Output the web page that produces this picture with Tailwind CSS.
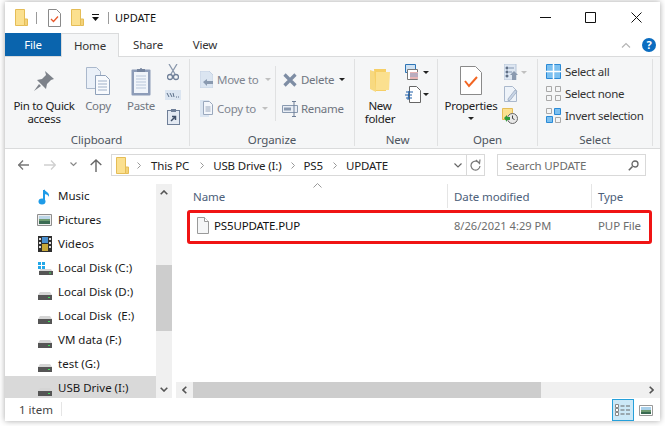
<!DOCTYPE html>
<html><head><meta charset="utf-8"><script src="https://cdn.jsdelivr.net/npm/@tailwindcss/browser@4"></script></head>
<body class="bg-white">
<div class="w-[665px] h-[426px] overflow-hidden pt-[2px] pl-[5px] font-['Noto_Sans',sans-serif] text-[11.5px] leading-[13px] text-[#1a1a1a]">
<div class="w-[655px] h-[419px] bg-white flex flex-col shadow-[0_0_6px_rgba(0,0,0,0.35)]">

<!-- title bar -->
<div class="h-[31px] shrink-0 flex items-center relative">
  <svg class="ml-[10px]" width="13" height="17" viewBox="0 0 13 17"><path d="M.5.5h9v16h-9z" fill="#fbe08f" stroke="#e5bd56"/><path d="M9.500 10h3v6.500h-3z" fill="#f3d27a" stroke="#e5bd56"/></svg>
  <div class="ml-[8px] w-px h-[12px] bg-[#9a9a9a]"></div>
  <svg class="ml-[11px]" width="13" height="18" viewBox="0 0 13 18"><path d="M.5.500h8l4 4v13h-12z" fill="#fff" stroke="#8a8a8a"/><path d="M3 10l2.500 2.500L10 7.500" fill="none" stroke="#e8582a" stroke-width="1.300"/></svg>
  <svg class="ml-[10px]" width="13" height="17" viewBox="0 0 13 17"><path d="M.5.5h9v16h-9z" fill="#fbe08f" stroke="#e5bd56"/><path d="M9.500 10h3v6.500h-3z" fill="#f3d27a" stroke="#e5bd56"/></svg>
  <svg class="ml-[8px]" width="7" height="7" viewBox="0 0 7 7"><path d="M0 0h7v1H0zM0 3h7L3.500 7z" fill="#111"/></svg>
  <div class="ml-[9px] w-px h-[12px] bg-[#9a9a9a]"></div>
  <span class="ml-[6px] text-[11px] text-[#111]">UPDATE</span>
  <div class="ml-auto flex items-center pr-[18px]">
    <svg width="11" height="11" viewBox="0 0 11 11"><path d="M0 5.500h11" stroke="#111"/></svg>
    <svg class="ml-[34px]" width="11" height="11" viewBox="0 0 11 11"><path d="M.5.500h10v10H.5z" fill="none" stroke="#111"/></svg>
    <svg class="ml-[35px]" width="11" height="11" viewBox="0 0 11 11"><path d="M.5.500l10 10M10.500.500l-10 10" stroke="#111"/></svg>
  </div>
</div>

<!-- tabs -->
<div class="h-[24px] shrink-0 flex items-stretch border-b border-[#dadbdc] text-[11.5px] tracking-[-0.2px] relative">
  <div class="w-[56px] h-[23px] bg-[#0a64ad] text-white flex items-center justify-center">File</div>
  <div class="w-[58px] h-[24px] bg-[#f5f6f7] border border-b-0 border-[#dadbdc] text-[#333] flex items-center justify-center">Home</div>
  <div class="w-[58px] text-[#333] flex items-center justify-center">Share</div>
  <div class="w-[56px] text-[#333] flex items-center justify-center">View</div>
  <div class="ml-auto flex items-center pr-[4px] gap-[11px]">
    <svg width="10" height="6" viewBox="0 0 10 6"><path d="M1 5.500l4-4 4 4" fill="none" stroke="#b5b5b5" stroke-width="1.200"/></svg>
    <div class="w-[14px] h-[14px] rounded-full bg-[#0a6cc0] text-white font-bold text-[11px] flex items-center justify-center">?</div>
  </div>
</div>

<!-- ribbon -->
<div class="h-[92px] shrink-0 bg-[#f5f6f7] border-b border-[#dadbdc] flex text-[#6f7580] tracking-[-0.3px]">
  <!-- clipboard -->
  <div class="w-[185px] my-[2px] border-r border-[#e0e1e2] flex flex-col">
    <div class="h-[74px] flex pl-[8px] pt-[3px]">
      <div class="w-[62px] flex flex-col items-center text-center text-[#222] whitespace-nowrap">
        <div class="h-[37px] flex items-center justify-center">
          <svg width="22" height="22" viewBox="0 0 22 22"><path d="M12 1l9 8-3 1-4 4-1 5-9-9 5-1 4-4z" fill="#7d828a"/><path d="M6 14l-5 7 7-5z" fill="#7d828a"/></svg>
        </div>
        <span>Pin to Quick<br>access</span>
      </div>
      <div class="w-[36px] ml-[5px] flex flex-col items-center">
        <div class="h-[37px] flex items-center justify-center">
          <svg width="24" height="28" viewBox="0 0 24 28"><path d="M.5.500h10l4 4v17H.5z" fill="#eaf0f8" stroke="#aab8cc"/><path d="M9.500 8.500h10l4 4v15h-14z" fill="#f8fafd" stroke="#8fa1ba"/><path d="M12 14h9M12 17h9M12 20h9M12 23h9" stroke="#9fb0c8"/></svg>
        </div>
        <span>Copy</span>
      </div>
      <div class="w-[36px] ml-[7px] flex flex-col items-center">
        <div class="h-[37px] flex items-center justify-center">
          <svg width="20" height="30" viewBox="0 0 20 30"><rect x=".5" y="3.500" width="19" height="26" rx="1" fill="#8d9cb8"/><rect x="3" y="6" width="14" height="21" fill="#f0f4fa"/><path d="M5 10h10M5 13h10M5 16h10M5 19h10M5 22h10" stroke="#b8c6da"/><path d="M6 3h3a1 1 0 012 0h3v3H6z" fill="#76859f"/></svg>
        </div>
        <span>Paste</span>
      </div>
      <div class="w-[20px] ml-[4px] flex flex-col items-center">
        <svg class="mt-[2px]" width="12" height="17" viewBox="0 0 12 17"><path d="M2 0l6 10M10 0L4 10" stroke="#8a98ad" stroke-width="1.300"/><circle cx="3" cy="13" r="2.500" fill="none" stroke="#6f7f98" stroke-width="1.300"/><circle cx="9" cy="13" r="2.500" fill="none" stroke="#6f7f98" stroke-width="1.300"/></svg>
        <svg class="mt-[9px]" width="16" height="10" viewBox="0 0 16 10"><path d="M0 0h16v10H0z" fill="#dbe5f1"/><path d="M2 3l2 4M5 3l2 4M8 3l1 4" stroke="#5a6d88"/><path d="M11 7h1M13 7h1" stroke="#5a6d88"/></svg>
        <svg class="mt-[8px]" width="13" height="17" viewBox="0 0 13 17"><rect x=".5" y="2.500" width="12" height="14" fill="#e3e9f2" stroke="#6f7f98"/><path d="M4 1h5v3H4z" fill="#6f7f98"/><path d="M4 13l4-4M5 8.500h3.500V12" fill="none" stroke="#3f4f68" stroke-width="1.500"/></svg>
      </div>
    </div>
    <div class="text-center text-[#4e5560] text-[11.5px] tracking-[-0.1px] pr-[1px] pt-[1px]">Clipboard</div>
  </div>
  <!-- organize -->
  <div class="w-[165px] my-[2px] border-r border-[#e0e1e2] flex flex-col">
    <div class="h-[74px] flex pt-[7px]">
      <div class="w-[86px] border-r border-[#e0e1e2] h-[55px] pl-[10px]">
        <div class="h-[29px] flex items-center mt-[-1px]">
          <svg width="13" height="17" viewBox="0 0 13 17"><path d="M0 0h9l4 4v13H0z" fill="#dbe5f1" stroke="#c5d2e3"/><path d="M3 11l4-3v2h6v3H7v2z" fill="#8a9ab0"/></svg>
          <span class="ml-[4px] text-[#7f8590]">Move to</span>
          <svg class="ml-[6px]" width="6" height="3" viewBox="0 0 6 3"><path d="M0 0h6L3 3z" fill="#c0c0c0"/></svg>
        </div>
        <div class="h-[29px] flex items-center">
          <svg width="13" height="17" viewBox="0 0 13 17"><path d="M0 0h9v17H0z" fill="#dbe5f1"/><path d="M3.500 1.500h6l3 3v10h-9z" fill="#f3f6fb" stroke="#9aa8bd"/><path d="M5.500 7h5M5.500 9h5M5.500 11h5" stroke="#9aa8bd"/></svg>
          <span class="ml-[4px] text-[#7f8590]">Copy to</span>
          <svg class="ml-[6px]" width="6" height="3" viewBox="0 0 6 3"><path d="M0 0h6L3 3z" fill="#c0c0c0"/></svg>
        </div>
      </div>
      <div class="pl-[6px]">
        <div class="h-[29px] flex items-center mt-[-1px]">
          <svg class="ml-[1px]" width="14" height="14" viewBox="0 0 14 14"><path d="M1.500 1.500l11 11M12.500 1.500l-11 11" stroke="#7e8da4" stroke-width="3.200"/></svg>
          <span class="ml-[4px] text-[#6f7580]">Delete</span>
          <svg class="ml-[5px]" width="6" height="3" viewBox="0 0 6 3"><path d="M0 0h6L3 3z" fill="#222"/></svg>
        </div>
        <div class="h-[29px] flex items-center">
          <svg width="16" height="16" viewBox="0 0 16 16"><path d="M.5 4.500h15v7H.5z" fill="#e9eef5" stroke="#8a9ab0"/><path d="M2 6.500h7v3H2z" fill="#8a9ab0"/><path d="M12 0v16M10 .5h4M10 15.500h4" stroke="#6f7f98"/></svg>
          <span class="ml-[3px] text-[#6f7580]">Rename</span>
        </div>
      </div>
    </div>
    <div class="text-center text-[#4e5560] text-[11.5px] tracking-[-0.1px] pt-[1px]">Organize</div>
  </div>
  <!-- new -->
  <div class="w-[83px] my-[2px] border-r border-[#e0e1e2] flex flex-col">
    <div class="h-[74px] flex pt-[3px]">
      <div class="ml-[5px] w-[40px] flex flex-col items-center text-center text-[#222]">
        <div class="h-[37px] flex items-center justify-center">
          <svg width="20" height="26" viewBox="0 0 20 26"><path d="M0 2l6 2v20l-6-3z" fill="#f7d980"/><path d="M4 1h12v22H6z" fill="#f6cf66"/><path d="M6 4h14l-1 18H6z" fill="#fbe08f"/></svg>
        </div>
        <span>New<br>folder</span>
      </div>
      <div class="ml-[5px] mt-[2px]">
        <div class="flex items-center">
          <svg width="16" height="16" viewBox="0 0 16 16"><path d="M.5.500h10v8H.5z" fill="#cfe2f3" stroke="#2e75b6"/><path d="M2.500 5.500h10v10h-10z" fill="#fff" stroke="#777"/><path d="M5 8h8v7H5z" fill="#e8b5b5"/><path d="M5 10h8M5 12h8" stroke="#8aa4c8"/></svg>
          <svg class="ml-[2px]" width="6" height="3" viewBox="0 0 6 3"><path d="M0 0h6L3 3z" fill="#222"/></svg>
        </div>
        <div class="flex items-center mt-[6px]">
          <svg width="16" height="17" viewBox="0 0 16 17"><path d="M4.500.500h7l4 4v12h-11z" fill="#fff" stroke="#666"/><path d="M1 6h7M0 9h7M1 12h6M4 5l-1 9" stroke="#1f5fa8"/></svg>
          <svg class="ml-[2px]" width="6" height="3" viewBox="0 0 6 3"><path d="M0 0h6L3 3z" fill="#222"/></svg>
        </div>
      </div>
    </div>
    <div class="text-center text-[#4e5560] text-[11.5px] tracking-[-0.1px] pt-[1px] pl-[3px]">New</div>
  </div>
  <!-- open -->
  <div class="w-[100px] my-[2px] border-r border-[#e0e1e2] flex flex-col">
    <div class="h-[74px] flex pt-[3px]">
      <div class="ml-[5px] w-[56px] flex flex-col items-center text-center text-[#222]">
        <div class="h-[37px] flex items-center justify-center">
          <svg width="22" height="29" viewBox="0 0 22 29"><path d="M.5.500h15l6 6v22H.5z" fill="#fff" stroke="#8a8a8a"/><path d="M5 15l4 5 8-9" fill="none" stroke="#f26522" stroke-width="2"/></svg>
        </div>
        <span>Properties</span>
        <svg class="mt-[5px]" width="6" height="3" viewBox="0 0 6 3"><path d="M0 0h6L3 3z" fill="#222"/></svg>
      </div>
      <div class="ml-[5px] mt-[2px]">
        <div class="flex items-center">
          <svg width="14" height="16" viewBox="0 0 14 16"><path d="M0 0h12v16H0z" fill="#dde6f1" stroke="#b7c5d8"/><path d="M2 3h2v2H2zM2 7h2v2H2zM2 11h2v2H2zM5 4h5M5 8h3" stroke="#8295b0"/><path d="M10 7l4 4h-2v5H8v-5H6z" fill="#8a9ab0"/></svg>
          <svg class="ml-[3px]" width="6" height="3" viewBox="0 0 6 3"><path d="M0 0h6L3 3z" fill="#c0c0c0"/></svg>
        </div>
        <svg class="mt-[6px]" width="14" height="16" viewBox="0 0 14 16"><path d="M.5.500h8l4 4v11H.500z" fill="#eef3f9" stroke="#aab8cc"/><path d="M4 13l7-9 2 1.500-7 9H4z" fill="#c7d4e6" stroke="#8a9ab0" stroke-width=".6"/></svg>
        <svg class="mt-[6px] -ml-[2px]" width="16" height="16" viewBox="0 0 16 16"><path d="M.5.500h10v11H.5z" fill="#fbe08f" stroke="#e5bd56"/><circle cx="10.500" cy="10.500" r="5" fill="#e8e8e8" stroke="#666"/><path d="M10.500 7.500v3l2 1" fill="none" stroke="#444"/><path d="M2 10l3-3v2h3v3H5v2z" fill="#2e9b3a"/></svg>
      </div>
    </div>
    <div class="text-center text-[#4e5560] text-[11.5px] tracking-[-0.1px] pt-[1px]">Open</div>
  </div>
  <!-- select -->
  <div class="w-[115px] my-[2px] border-r border-[#e0e1e2] flex flex-col">
    <div class="h-[74px] pl-[8px] pt-[1px] flex flex-col text-[#333]">
      <div class="h-[22px] flex items-center gap-[4px]">
        <svg width="15" height="15" viewBox="0 0 15 15"><path d="M.5.500h14v14H.5z" fill="#7cc0f0" stroke="#2b8ad6"/><path d="M7.500 0v15M0 7.500h15" stroke="#fff" stroke-width="1.500"/></svg><span>Select all</span>
      </div>
      <div class="h-[22px] flex items-center gap-[4px]">
        <svg width="15" height="15" viewBox="0 0 15 15"><g fill="none" stroke="#a9a9a9"><path d="M.5.500h5v5h-5zM9.500.500h5v5h-5zM.5 9.500h5v5h-5zM9.500 9.500h5v5h-5z"/></g></svg><span>Select none</span>
      </div>
      <div class="h-[22px] flex items-center gap-[4px]">
        <svg width="15" height="15" viewBox="0 0 15 15"><g fill="none" stroke="#a9a9a9"><path d="M.5.500h5v5h-5zM9.500 9.500h5v5h-5z"/></g><path d="M8.500.500h6v6h-6zM.5 8.500h6v6h-6z" fill="#7cc0f0" stroke="#2b8ad6"/></svg><span>Invert selection</span>
      </div>
    </div>
    <div class="text-center text-[#4e5560] text-[11.5px] tracking-[-0.1px] pt-[1px]">Select</div>
  </div>
</div>

<!-- address bar -->
<div class="h-[28px] shrink-0 flex items-start text-[#222] pt-[5px] tracking-[-0.15px]">
  <svg class="ml-[13px] mt-[6px]" width="12" height="10" viewBox="0 0 12 10"><path d="M0 5h11M5 .5L.7 5 5 9.500" fill="none" stroke="#777" stroke-width="1.300"/></svg>
  <svg class="ml-[14px] mt-[6px]" width="12" height="10" viewBox="0 0 12 10"><path d="M0 5h11M7 .5L11.300 5 7 9.500" fill="none" stroke="#d0d0d0" stroke-width="1.300"/></svg>
  <svg class="ml-[14px] mt-[8px]" width="7" height="5" viewBox="0 0 7 5"><path d="M.5.500l3 3 3-3" fill="none" stroke="#888" stroke-width="1.200"/></svg>
  <svg class="ml-[13px] mt-[5px]" width="12" height="13" viewBox="0 0 12 13"><path d="M6 13V1M.7 6L6 1l5.300 5" fill="none" stroke="#666" stroke-width="1.400"/></svg>
  <div class="ml-[9px] w-[374px] h-[22px] border border-[#d9d9d9] flex items-center">
    <svg class="ml-[4px]" width="13" height="17" viewBox="0 0 13 17"><path d="M.5.5h9v16h-9z" fill="#fbe08f" stroke="#e5bd56"/><path d="M9.500 10h3v6.500h-3z" fill="#f3d27a" stroke="#e5bd56"/></svg>
    <svg class="ml-[8px]" width="4" height="7" viewBox="0 0 4 7"><path d="M.5.500l3 3-3 3" fill="none" stroke="#999"/></svg>
    <span class="ml-[10px]">This PC</span>
    <svg class="ml-[11px]" width="4" height="7" viewBox="0 0 4 7"><path d="M.5.500l3 3-3 3" fill="none" stroke="#999"/></svg>
    <span class="ml-[9px]">USB Drive (I:)</span>
    <svg class="ml-[9px]" width="4" height="7" viewBox="0 0 4 7"><path d="M.5.500l3 3-3 3" fill="none" stroke="#999"/></svg>
    <span class="ml-[9px]">PS5</span>
    <svg class="ml-[10px]" width="4" height="7" viewBox="0 0 4 7"><path d="M.5.500l3 3-3 3" fill="none" stroke="#999"/></svg>
    <span class="ml-[9px]">UPDATE</span>
    <svg class="ml-auto mr-[4px]" width="8" height="5" viewBox="0 0 8 5"><path d="M.5.500L4 4 7.500.500" fill="none" stroke="#666" stroke-width="1.200"/></svg>
    <div class="w-[18px] h-[20px] border-l border-[#d9d9d9] flex items-center justify-center">
      <svg width="11" height="12" viewBox="0 0 11 12"><path d="M9.500 4.500A4.500 4.500 0 1 0 10 7M6 1l3.500 3.500L10 .500" fill="none" stroke="#777" stroke-width="1.200"/></svg>
    </div>
  </div>
  <div class="ml-[12px] w-[149px] h-[22px] border border-[#d9d9d9] flex items-center pl-[8px] pr-[6px] text-[#6d6d6d]">
    <span>Search UPDATE</span>
    <svg class="ml-auto" width="11" height="11" viewBox="0 0 11 11"><circle cx="7" cy="4" r="3" fill="none" stroke="#666" stroke-width="1.300"/><path d="M4.500 6.500L.8 10.200" stroke="#666" stroke-width="1.600"/></svg>
  </div>
</div>

<!-- main -->
<div class="flex-1 min-h-0 flex pt-[7px]">
  <!-- nav -->
  <div class="w-[151px] shrink-0 h-[214px] overflow-hidden text-[#1a1a1a]">
    <div class="h-[24px] flex items-center pl-[33px]"><div class="w-[20px] flex"><svg width="14" height="17" viewBox="0 0 14 17"><path d="M6 2v11" stroke="#1e9be8" stroke-width="2"/><ellipse cx="4" cy="13.500" rx="3.500" ry="3" fill="#1e9be8"/><path d="M6 1c1 3 6 3 5 8-.5-2-3-3-5-3z" fill="#1e9be8"/></svg></div><span class="-mt-[2px]">Music</span></div>
    <div class="h-[24px] flex items-center pl-[32px]"><div class="w-[21px] flex"><svg width="15" height="12" viewBox="0 0 15 12"><path d="M.5.500h14v11H.5z" fill="#eee" stroke="#8e8e8e"/><path d="M2 2h11v4H2z" fill="#bcd6e8"/><path d="M2 5h11v2H2z" fill="#6d9a70"/><path d="M2 7h11v3H2z" fill="#3a6a52"/></svg></div><span class="-mt-[2px]">Pictures</span></div>
    <div class="h-[24px] flex items-center pl-[33px]"><div class="w-[20px] flex"><svg width="14" height="16" viewBox="0 0 14 16"><path d="M0 0h14v16H0z" fill="#2f2f2f"/><path d="M4 1h6v6H4z" fill="#4a90d0"/><path d="M4 8h6v7H4z" fill="#c7a83a"/><path d="M1 2h2v2H1zM1 6h2v2H1zM1 10h2v2H1zM11 2h2v2h-2zM11 6h2v2h-2zM11 10h2v2h-2z" fill="#ddd"/></svg></div><span class="-mt-[2px]">Videos</span></div>
    <div class="h-[24px] flex items-center pl-[32px]"><div class="w-[21px] flex"><svg width="16" height="13" viewBox="0 0 16 13"><path d="M1 0h3v3H1zM5 0h3v3H5zM1 4h3v3H1zM5 4h3v3H5z" fill="#22a7e8"/><path d="M3 7h11l2 3H2z" fill="#d5d5d5"/><path d="M2 9h14v4H2z" fill="#555"/><path d="M12 10.500h2v1h-2z" fill="#3fdc5a"/></svg></div><span class="-mt-[2px]">Local Disk (C:)</span></div>
    <div class="h-[24px] flex items-center pl-[33px]"><div class="w-[20px] flex pt-[7px]"><svg width="14" height="8" viewBox="0 0 14 8"><path d="M2 0h10l2 3H0z" fill="#d5d5d5"/><path d="M0 3h14v5H0z" fill="#555"/><path d="M10 5h2v1h-2z" fill="#3fdc5a"/></svg></div><span class="-mt-[2px]">Local Disk (D:)</span></div>
    <div class="h-[24px] flex items-center pl-[33px]"><div class="w-[20px] flex pt-[7px]"><svg width="14" height="8" viewBox="0 0 14 8"><path d="M2 0h10l2 3H0z" fill="#d5d5d5"/><path d="M0 3h14v5H0z" fill="#555"/><path d="M10 5h2v1h-2z" fill="#3fdc5a"/></svg></div><span class="-mt-[2px] whitespace-pre">Local Disk  (E:)</span></div>
    <div class="h-[24px] flex items-center pl-[33px]"><div class="w-[20px] flex pt-[7px]"><svg width="14" height="8" viewBox="0 0 14 8"><path d="M2 0h10l2 3H0z" fill="#d5d5d5"/><path d="M0 3h14v5H0z" fill="#555"/><path d="M10 5h2v1h-2z" fill="#3fdc5a"/></svg></div><span class="-mt-[2px]">VM data (F:)</span></div>
    <div class="h-[24px] flex items-center pl-[33px]"><div class="w-[20px] flex pt-[7px]"><svg width="14" height="8" viewBox="0 0 14 8"><path d="M2 0h10l2 3H0z" fill="#d5d5d5"/><path d="M0 3h14v5H0z" fill="#555"/><path d="M10 5h2v1h-2z" fill="#3fdc5a"/></svg></div><span class="-mt-[2px]">test (G:)</span></div>
    <div class="h-[24px] flex items-center pl-[33px] bg-[#d9d9d9]"><div class="w-[20px] flex pt-[7px]"><svg width="14" height="8" viewBox="0 0 14 8"><path d="M2 0h10l2 3H0z" fill="#d5d5d5"/><path d="M0 3h14v5H0z" fill="#555"/><path d="M10 5h2v1h-2z" fill="#3fdc5a"/></svg></div><span class="-mt-[2px]">USB Drive (I:)</span></div>
  </div>
  <!-- nav scrollbar -->
  <div class="w-[16px] shrink-0 h-[214px] bg-[#f0f0f0] flex flex-col items-center">
    <div class="h-[17px] flex items-center justify-center"><svg width="8" height="5" viewBox="0 0 8 5"><path d="M.7 4.300L4 1l3.300 3.300" fill="none" stroke="#555" stroke-width="1.600"/></svg></div>
    <div class="w-full h-[66px] mt-[64px] bg-[#cdcdcd]"></div>
    <div class="mt-auto h-[17px] flex items-center justify-center"><svg width="8" height="5" viewBox="0 0 8 5"><path d="M.7.700L4 4l3.300-3.300" fill="none" stroke="#555" stroke-width="1.600"/></svg></div>
  </div>
  <!-- content -->
  <div class="ml-[4px] flex-1 min-w-0 h-[214px] flex flex-col relative">
    <div class="h-[26px] shrink-0 flex items-center pb-[2px] text-[11.5px] tracking-[-0.1px] text-[#4c607a] relative">
      <div class="w-[272px] pl-[17px] h-full flex items-center border-r border-[#e5e5e5]">Name</div>
      <div class="w-[144px] pl-[6px] h-full flex items-center border-r border-[#e5e5e5]">Date modified</div>
      <div class="pl-[6px]">Type</div>
      <svg class="absolute left-[137px] top-[-1px]" width="9" height="5" viewBox="0 0 9 5"><path d="M.5 4.500L4.500.5l4 4" fill="none" stroke="#9a9a9a"/></svg>
    </div>
    <div class="ml-[11px] w-[465px] h-[34px] shrink-0 border-[3px] border-[#f01414] rounded-[3px] flex items-center pb-[4px]">
      <svg class="ml-[7px] shrink-0" width="12" height="17" viewBox="0 0 12 17"><path d="M.5.500h7l4 4v12H.5z" fill="#f5f6f7" stroke="#9a9a9a"/><path d="M7.500.500v4h4" fill="#fff" stroke="#9a9a9a"/></svg>
      <span class="ml-[5px] text-[#111] w-[240px] tracking-[-0.15px]">PS5UPDATE.PUP</span>
      <span class="text-[#6d6d6d] w-[144px] text-[11.1px]">8/26/2021 4:29 PM</span>
      <span class="text-[#6d6d6d] tracking-[-0.1px]">PUP File</span>
    </div>
    <div class="mt-auto h-[16px] bg-[#f0f0f0] flex items-center">
      <div class="w-[17px] flex justify-center"><svg width="5" height="8" viewBox="0 0 5 8"><path d="M4.300.7L1 4l3.300 3.300" fill="none" stroke="#555" stroke-width="1.600"/></svg></div>
      <div class="w-[348px] h-full bg-[#cdcdcd]"></div>
      <div class="ml-auto w-[17px] flex justify-center"><svg width="5" height="8" viewBox="0 0 5 8"><path d="M.7.700L4 4 .7 7.300" fill="none" stroke="#555" stroke-width="1.600"/></svg></div>
    </div>
  </div>
</div>

<!-- status -->
<div class="h-[22px] shrink-0 flex items-center text-[#444] relative">
  <span class="ml-[14px] w-[43px] h-[14px] mb-[2px] flex items-center border-r border-[#e5e5e5]">1 item</span>
  <div class="ml-auto mr-[7px] flex items-center gap-[5px]">
    <div class="w-[22px] h-[22px] bg-[#cce8f7] border border-[#26a0da] flex items-center justify-center">
      <svg width="16" height="13" viewBox="0 0 16 13"><path d="M.5.500h3v3h-3zM.5 4.500h3v3h-3zM.5 8.500h3v3h-3z" fill="#fff" stroke="#888"/><path d="M5.500 2h4M11 2h4M5.500 6h4M11 6h4M5.500 10h4M11 10h4" stroke="#666"/></svg>
    </div>
    <svg width="14" height="11" viewBox="0 0 14 11"><path d="M.5.500h13v10H.5z" fill="#fff" stroke="#999"/><path d="M2 2h10v3H2z" fill="#a8d0ea"/><path d="M2 5h10v2H2z" fill="#6d9a70"/><path d="M2 7h10v2H2z" fill="#3a6a52"/></svg>
  </div>
</div>

</div>
</div>
</body></html>
